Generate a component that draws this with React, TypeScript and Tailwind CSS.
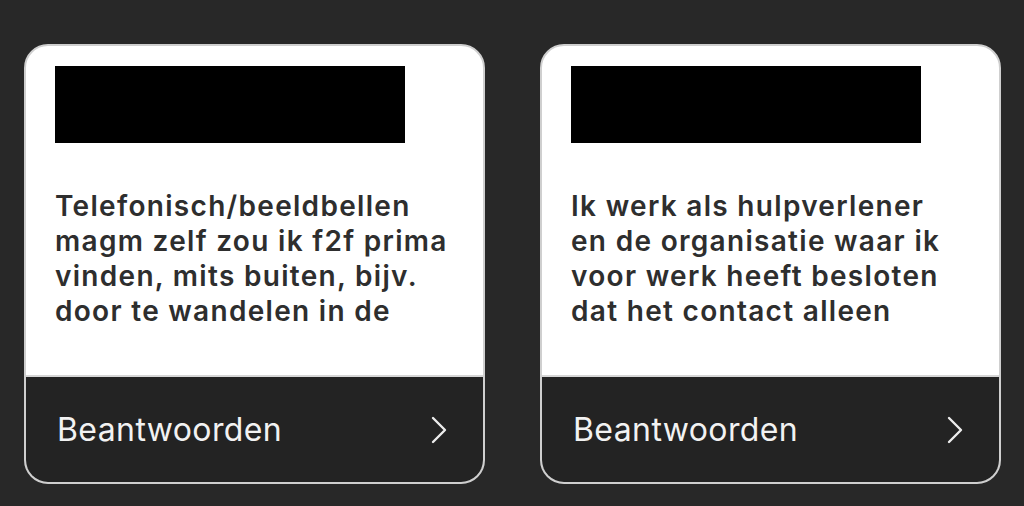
const cards = [
  {
    lines: [
      'Telefonisch/beeldbellen',
      'magm zelf zou ik f2f prima',
      'vinden, mits buiten, bijv.',
      'door te wandelen in de',
    ],
  },
  {
    lines: [
      'Ik werk als hulpverlener',
      'en de organisatie waar ik',
      'voor werk heeft besloten',
      'dat het contact alleen',
    ],
  },
]

function Chevron() {
  return (
    <svg width="18" height="28" viewBox="0 0 18 28" fill="none" className="text-[#ececec]">
      <polyline points="3,2 15,14 3,26" stroke="currentColor" strokeWidth="2.4" strokeLinecap="round" strokeLinejoin="round" />
    </svg>
  )
}

function Card({ lines }: { lines: string[] }) {
  return (
    <div className="flex h-[440px] w-[461px] flex-col overflow-hidden rounded-[24px] border-2 border-[#cfcfcf] bg-white">
      <div className="flex h-[329px] flex-col px-[29px] pt-[20px]">
        <div className="h-[77px] w-[350px] bg-black" />
        <p className="mt-[46px] text-[28px] font-semibold leading-[35px] tracking-[1.3px] text-[#2e2e2e]">
          {lines.map((l) => (
            <span key={l} className="block whitespace-nowrap">{l}</span>
          ))}
        </p>
      </div>
      <div className="flex flex-1 items-center justify-between border-t-2 border-[#d6d6d6] bg-[#232323] pl-[31px] pr-[35px]">
        <span className="text-[32px] font-normal tracking-[0.4px] text-[#f2f2f2]">Beantwoorden</span>
        <Chevron />
      </div>
    </div>
  )
}

export default function App() {
  return (
    <div
      className="flex h-[506px] w-[1024px] gap-[55px] bg-[#282828] pl-[24px] pt-[44px]"
      style={{ fontFamily: 'Inter, "Noto Sans", sans-serif' }}
    >
      {cards.map((c, i) => (
        <Card key={i} lines={c.lines} />
      ))}
    </div>
  )
}
